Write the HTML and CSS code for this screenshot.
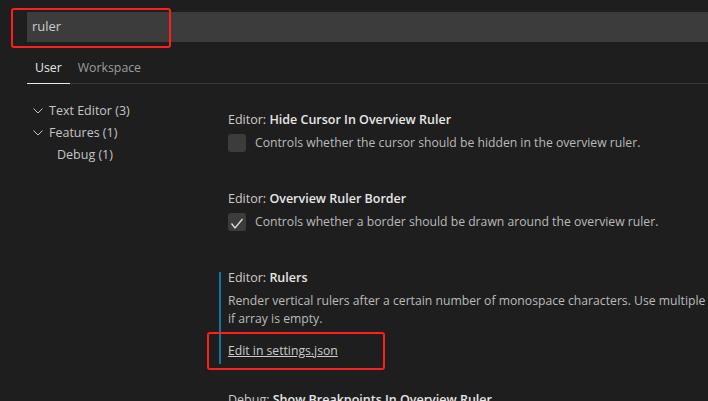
FILE: index.html
```html
<!DOCTYPE html>
<html>
<head>
<meta charset="utf-8">
<link rel="stylesheet" href="styles.css">
</head>
<body>
<div class="page">
  <div class="search-row">
    <div class="search-box">ruler</div>
  </div>
  <div class="tabs">
    <div class="tab active">User</div>
    <div class="tab">Workspace</div>
  </div>
  <div class="main">
    <div class="tree">
      <div class="tree-row"><svg class="chev" width="10" height="6" viewBox="0 0 10 6"><polyline points="0.5,0.5 5,5 9.5,0.5" fill="none" stroke="#c5c5c5" stroke-width="1"/></svg><span>Text Editor (3)</span></div>
      <div class="tree-row"><svg class="chev" width="10" height="6" viewBox="0 0 10 6"><polyline points="0.5,0.5 5,5 9.5,0.5" fill="none" stroke="#c5c5c5" stroke-width="1"/></svg><span>Features (1)</span></div>
      <div class="tree-row child"><span>Debug (1)</span></div>
    </div>
    <div class="settings">
      <div class="setting">
        <div class="title">Editor: <b>Hide Cursor In Overview Ruler</b></div>
        <div class="check-row">
          <div class="checkbox"></div>
          <div class="desc">Controls whether the cursor should be hidden in the overview ruler.</div>
        </div>
      </div>
      <div class="setting">
        <div class="title">Editor: <b>Overview Ruler Border</b></div>
        <div class="check-row">
          <div class="checkbox"><svg width="18" height="18" viewBox="0 0 18 18"><polyline points="3.5,10.5 7,15 14.5,6" fill="none" stroke="#e0e0e0" stroke-width="1.3"/></svg></div>
          <div class="desc">Controls whether a border should be drawn around the overview ruler.</div>
        </div>
      </div>
      <div class="setting focused">
        <div class="title">Editor: <b>Rulers</b></div>
        <div class="desc block">Render vertical rulers after a certain number of monospace characters. Use multiple values for multiple rulers. No rulers are drawn<br>if array is empty.</div>
        <a class="link">Edit in settings.json</a>
      </div>
      <div class="setting">
        <div class="title">Debug: <b>Show Breakpoints In Overview Ruler</b></div>
      </div>
    </div>
  </div>
  <div class="mark mark-search"></div>
  <div class="mark mark-link"></div>
</div>
</body>
</html>
```

FILE: styles.css
```css
html, body {
  margin: 0;
  padding: 0;
  background: #1e1e1e;
}
.page {
  position: relative;
  width: 708px;
  height: 401px;
  overflow: hidden;
  background: #1e1e1e;
  font-family: "Open Sans", "Noto Sans", sans-serif;
  font-size: 12.5px;
  color: #cccccc;
}
.search-row {
  padding: 12px 0 0 27px;
}
.search-box {
  height: 30px;
  line-height: 29px;
  background: #3c3c3c;
  padding-left: 5px;
  color: #cccccc;
  font-size: 13px;
}
.tabs {
  display: flex;
  margin-left: 27px;
  height: 42px;
  box-sizing: border-box;
  border-bottom: 1px solid #3a3a3a;
  align-items: flex-end;
}
.tab {
  padding: 0 8px;
  height: 24px;
  line-height: 18px;
  font-size: 12.3px;
  color: #9d9d9d;
  box-sizing: border-box;
}
.tab.active {
  color: #e7e7e7;
  border-bottom: 1px solid #e7e7e7;
  margin-bottom: -1px;
  height: 25px;
}
.main {
  display: flex;
}
.tree {
  width: 219px;
  flex: none;
  padding-top: 16px;
  padding-left: 33px;
  box-sizing: border-box;
}
.tree-row {
  height: 22px;
  line-height: 22px;
  display: flex;
  align-items: center;
  color: #c5c5c5;
}
.chev {
  margin-right: 6px;
  flex: none;
}
.tree-row.child {
  padding-left: 24px;
}
.settings {
  flex: 1;
  padding-top: 30px;
  min-width: 0;
}
.setting {
  padding-left: 7px;
  border-left: 2px solid transparent;
  padding-bottom: 4px;
  margin-bottom: 37px;
}
.setting.focused {
  border-left-color: #0f76a6;
  margin-bottom: 30px;
}
.title {
  line-height: 12px;
  color: #cccccc;
  white-space: nowrap;
}
.title b {
  font-weight: 600;
  color: #e7e7e7;
}
.check-row {
  display: flex;
  align-items: center;
  margin-top: 8px;
  height: 18px;
}
.checkbox {
  width: 18px;
  height: 18px;
  border-radius: 3px;
  background: #3c3c3c;
  flex: none;
  margin-right: 9px;
}
.checkbox svg {
  display: block;
}
.desc {
  line-height: 18px;
  font-size: 12.2px;
  color: #bbbbbb;
  white-space: nowrap;
}
.desc.block {
  margin-top: 8px;
}
.link {
  display: inline-block;
  margin-top: 14px;
  line-height: 18px;
  font-size: 12.2px;
  color: #cccccc;
  text-decoration: underline;
}
.mark {
  position: absolute;
  border: 2px solid #ff1f1a;
  border-radius: 3px;
  box-sizing: border-box;
}
.mark-search {
  left: 11px;
  top: 8px;
  width: 160px;
  height: 40px;
}
.mark-link {
  left: 207px;
  top: 332px;
  width: 178px;
  height: 38px;
}
```
